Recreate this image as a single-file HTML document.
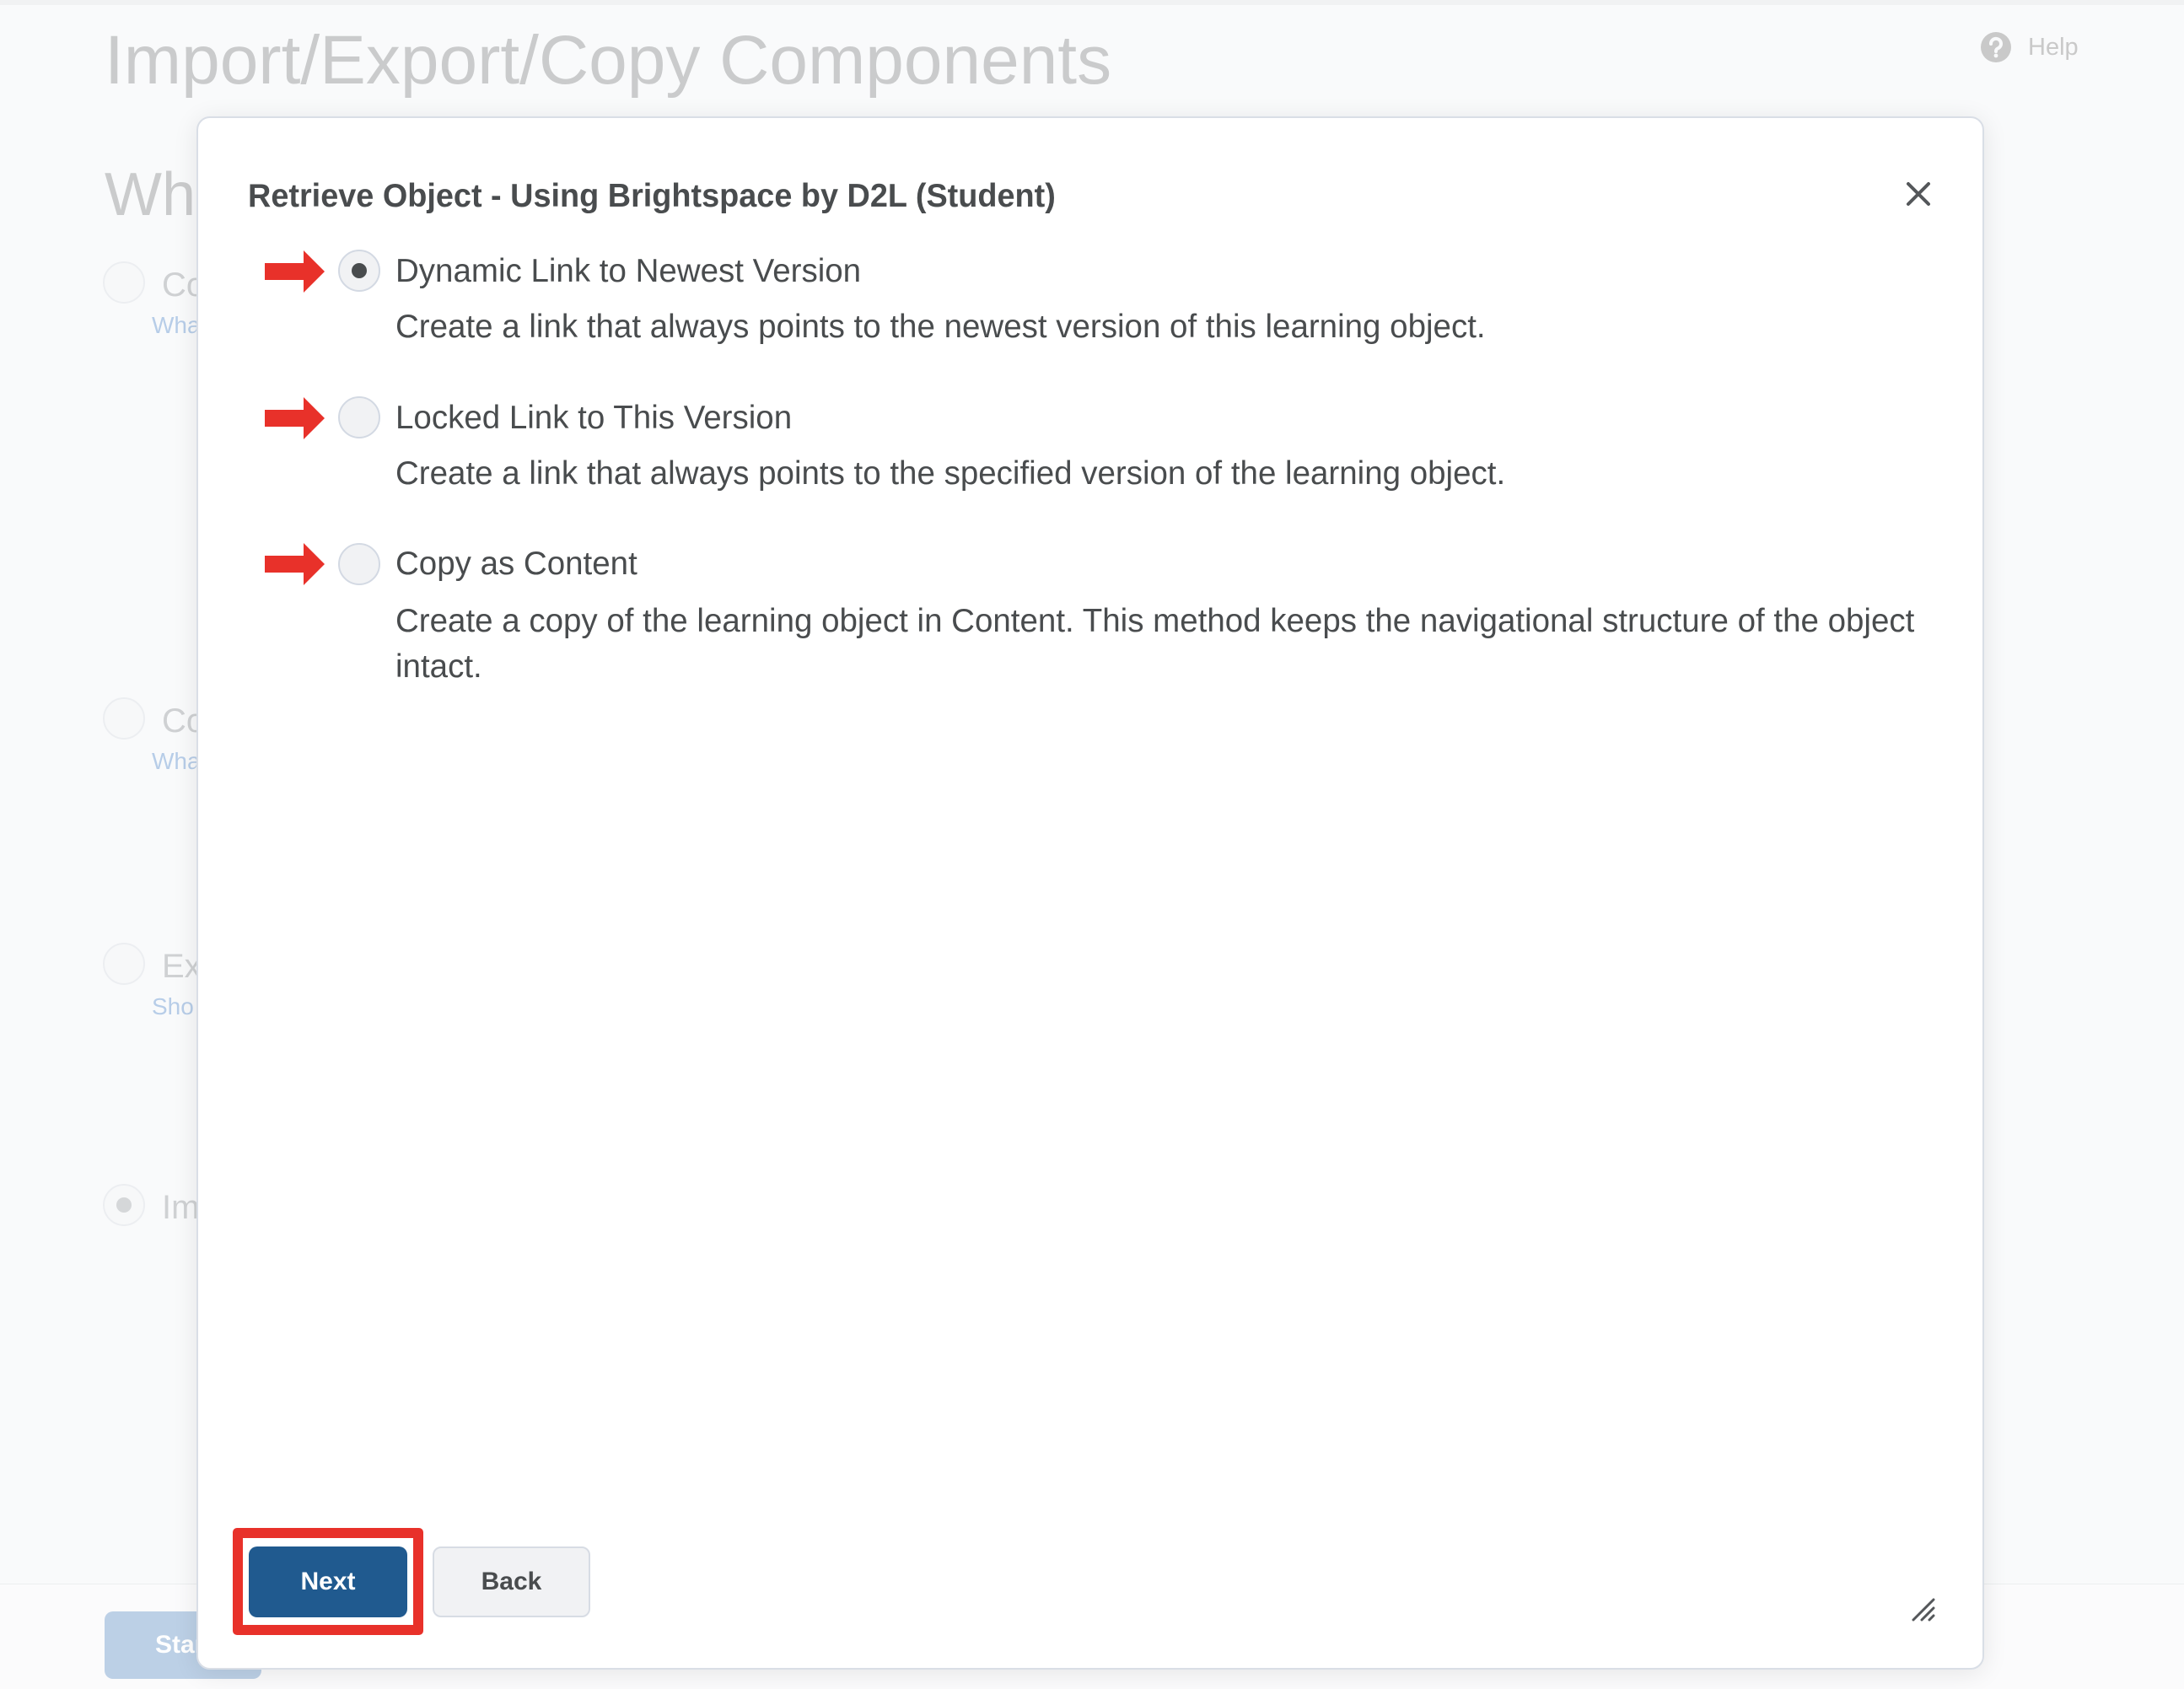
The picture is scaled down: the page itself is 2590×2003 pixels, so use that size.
<!DOCTYPE html>
<html><head><meta charset="utf-8"><style>
*{margin:0;padding:0;box-sizing:border-box}
body{width:2590px;height:2003px;background:#f9fafb;font-family:"Liberation Sans",sans-serif;position:relative;overflow:hidden;color:#494c4e}
.a{position:absolute;white-space:nowrap}
.bgr{position:absolute;width:50px;height:50px;border-radius:50%;border:2px solid #eceef1;background:#f7f8f9}
.bgt{position:absolute;font-size:40px;line-height:40px;color:#cfd1d3}
.bgl{position:absolute;font-size:28px;line-height:28px;color:#b7cde8}
.rad{position:absolute;left:401px;width:50px;height:50px;border-radius:50%;border:2px solid #d3d9e3;background:#f1f2f4}
.lab{position:absolute;left:469px;font-size:38.5px;line-height:38px;white-space:nowrap}
.desc{position:absolute;left:469px;font-size:38.5px;line-height:54px;white-space:nowrap}
.arr{position:absolute;left:314px;width:72px;height:50px}
</style></head><body>
<div class="a" style="left:0;top:0;width:2590px;height:6px;background:#f1f2f3"></div>
<div class="a" style="left:124px;top:31px;font-size:82px;line-height:82px;color:#cacbcc">Import/Export/Copy Components</div>
<div class="a" style="left:124px;top:195px;font-size:72px;line-height:72px;color:#cacbcc">What</div>
<svg class="a" style="left:2348px;top:37px" width="38" height="38" viewBox="0 0 38 38"><circle cx="19" cy="19" r="18" fill="#c9c9c9"/><path d="M13 15a6 6 0 1 1 8 5.5c-1.5.7-2 1.5-2 3.5" stroke="#f9fafb" stroke-width="4" fill="none" stroke-linecap="round"/><circle cx="19" cy="29" r="2.4" fill="#f9fafb"/></svg>
<div class="a" style="left:2405px;top:42px;font-size:29px;line-height:29px;color:#c9c9c9">Help</div>

<div class="bgr" style="left:122px;top:310px"></div><div class="bgt" style="left:192px;top:318px">Co</div><div class="bgl" style="left:180px;top:372px">Wha</div>
<div class="bgr" style="left:122px;top:827px"></div><div class="bgt" style="left:192px;top:835px">Co</div><div class="bgl" style="left:180px;top:889px">Wha</div>
<div class="bgr" style="left:122px;top:1118px"></div><div class="bgt" style="left:192px;top:1126px">Ex</div><div class="bgl" style="left:180px;top:1180px">Sho</div>
<div class="bgr" style="left:122px;top:1404px"><div style="position:absolute;left:14px;top:14px;width:18px;height:18px;border-radius:50%;background:#d5d7d9"></div></div><div class="bgt" style="left:192px;top:1412px">Im</div>

<div class="a" style="left:0;top:1878px;width:2590px;height:125px;background:#fbfbfc;border-top:1px solid #eceef0"></div>
<div class="a" style="left:124px;top:1911px;width:186px;height:80px;border-radius:10px;background:#bcd0e6;color:#fff;font-weight:bold;font-size:30px;line-height:80px;padding-left:60px">Start</div>

<div class="a" style="left:233px;top:138px;width:2120px;height:1842px;background:#fff;border:2px solid #d9dee6;border-radius:16px;box-shadow:0 4px 30px rgba(0,0,0,.09)"></div>
<div class="a" style="left:294px;top:213px;font-size:39px;line-height:39px;font-weight:bold;color:#494c4e;transform:scaleX(0.97);transform-origin:left">Retrieve Object - Using Brightspace by D2L (Student)</div>
<svg class="a" style="left:2260px;top:215px" width="30" height="30" viewBox="0 0 30 30"><path d="M3 3L27 27M27 3L3 27" stroke="#54575a" stroke-width="4" stroke-linecap="round"/></svg>

<svg class="arr" style="top:297px" viewBox="0 0 72 50"><path d="M0 15H46V0L71 25L46 50V35H0Z" fill="#e8312a"/></svg>
<svg class="arr" style="top:471px" viewBox="0 0 72 50"><path d="M0 15H46V0L71 25L46 50V35H0Z" fill="#e8312a"/></svg>
<svg class="arr" style="top:644px" viewBox="0 0 72 50"><path d="M0 15H46V0L71 25L46 50V35H0Z" fill="#e8312a"/></svg>

<div class="rad" style="top:296px"><div style="position:absolute;left:14px;top:14px;width:18px;height:18px;border-radius:50%;background:#494c4e"></div></div>
<div class="lab" style="top:303px">Dynamic Link to Newest Version</div>
<div class="desc" style="top:361px">Create a link that always points to the newest version of this learning object.</div>

<div class="rad" style="top:470px"></div>
<div class="lab" style="top:477px">Locked Link to This Version</div>
<div class="desc" style="top:535px">Create a link that always points to the specified version of the learning object.</div>

<div class="rad" style="top:644px"></div>
<div class="lab" style="top:650px">Copy as Content</div>
<div class="desc" style="top:710px">Create a copy of the learning object in Content. This method keeps the navigational structure of the object<br>intact.</div>

<div class="a" style="left:276px;top:1812px;width:226px;height:127px;border:12px solid #e8312a;border-radius:5px"></div>
<div class="a" style="left:295px;top:1834px;width:188px;height:84px;border-radius:10px;background:#205a8f;color:#fff;font-weight:bold;font-size:30px;line-height:84px;text-align:center">Next</div>
<div class="a" style="left:513px;top:1834px;width:187px;height:84px;border-radius:10px;background:#f1f2f4;border:2px solid #d7dce4;color:#494c4e;font-weight:bold;font-size:30px;line-height:80px;text-align:center">Back</div>
<svg class="a" style="left:2266px;top:1894px" width="30" height="30" viewBox="0 0 30 30"><path d="M3 27L27 3M13 27L27 13M22 27L27 22" stroke="#54575a" stroke-width="3" stroke-linecap="round"/></svg>
</body></html>
